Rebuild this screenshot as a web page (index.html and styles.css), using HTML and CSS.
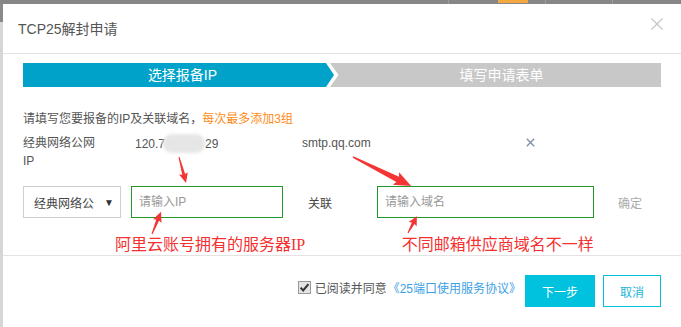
FILE: index.html
```html
<!DOCTYPE html>
<html lang="zh-CN">
<head>
  <meta charset="UTF-8">
  <title>TCP25解封申请</title>
  <link rel="stylesheet" href="styles.css">
</head>
<body>
<div class="topbar"><span class="sep sep1"></span><span class="badge"></span><span class="sep sep2"></span><span class="sep sep3"></span></div>

<div class="modal">
  <div class="modal-header">
    <span class="modal-title">TCP25解封申请</span>
    <svg class="close" width="12" height="12" viewBox="0 0 12 12">
      <path d="M0.5 0.5 L11.5 11.5 M11.5 0.5 L0.5 11.5" stroke="#c4c4c4" stroke-width="1.1" fill="none"/>
    </svg>
  </div>

  <div class="modal-body">
    <div class="steps">
      <div class="step active">选择报备IP</div>
      <div class="step">填写申请表单</div>
      <svg class="chevron" width="13" height="24" viewBox="0 0 13 24">
        <path d="M0 0 H4 L12.5 12 L4 24 H0 Z" fill="#fff"/>
        <path d="M0 0 L8 12 L0 24 Z" fill="#00a2ca"/>
      </svg>
    </div>

    <p class="tip">请填写您要报备的IP及关联域名，<span class="orange">每次最多添加3组</span></p>

    <div class="row">
      <div class="col-label">经典网络公网IP</div>
      <div class="col-ip">120.7<span class="blur"></span>29</div>
      <div class="col-domain">smtp.qq.com</div>
      <svg class="remove" width="9" height="9" viewBox="0 0 9 9">
        <path d="M0.8 0.8 L8.2 8.2 M8.2 0.8 L0.8 8.2" stroke="#8595a8" stroke-width="1.5" fill="none"/>
      </svg>
    </div>

    <div class="controls">
      <div class="select"><span class="select-text">经典网络公</span><span class="caret">▼</span></div>
      <input class="field field-ip" type="text" placeholder="请输入IP">
      <span class="link-word">关联</span>
      <input class="field field-domain" type="text" placeholder="请输入域名">
      <span class="confirm">确定</span>
    </div>

    <div class="notes">
      <span class="note note1">阿里云账号拥有的服务器IP</span>
      <span class="note note2">不同邮箱供应商域名不一样</span>
    </div>
  </div>

  <div class="modal-footer">
    <label class="agree">
      <svg class="check" width="13" height="13" viewBox="0 0 13 13">
        <rect x="0.5" y="0.5" width="12" height="12" fill="#e4e4e4" stroke="#9a9a9a"/>
        <path d="M2.6 6.6 L5.2 9.4 L10.4 3.2" stroke="#333" stroke-width="2" fill="none"/>
      </svg>
      已阅读并同意<a class="protocol">《25端口使用服务协议》</a>
    </label>
    <button class="btn btn-primary">下一步</button>
    <button class="btn btn-default">取消</button>
  </div>

  <!-- screenshot annotations -->
  <svg class="marks" width="678" height="323" viewBox="3 4 678 323">
    <g fill="#f43535">
      <path transform="translate(179 157) rotate(74.9)" d="M0 -0.5 L18 -1.5 L17 -4.5 L27 0 L17 4.5 L18 1.5 L0 0.5 Z"/>
      <path transform="translate(152 234) rotate(-67.8)" d="M0 -0.5 L15 -1.5 L14 -4.5 L24 0 L14 4.5 L15 1.5 L0 0.5 Z"/>
      <path transform="translate(353 157) rotate(26.6)" d="M0 -0.7 L50 -3 L48 -7 L65 0 L48 7 L50 3 L0 0.7 Z"/>
      <path transform="translate(408 233) rotate(-62.1)" d="M0 -0.5 L11 -1.5 L10 -4.5 L19 0 L10 4.5 L11 1.5 L0 0.5 Z"/>
    </g>
  </svg>
</div>
</body>
</html>
```

FILE: styles.css
```css
html, body {
  margin: 0;
  height: 100%;
  overflow: hidden;
}
body {
  font-family: "Liberation Sans", "Noto Sans CJK SC", sans-serif;
  font-size: 12px;
  color: #555;
  background: linear-gradient(#8a8a8a 0, #8a8a8a 22px, #d6d6d6 22px);
}
.topbar {
  height: 4px;
  background: #868686;
  display: flex;
  align-items: flex-start;
}
.sep {
  width: 1px;
  height: 4px;
  background: #9c9c9c;
}
.sep1 { margin-left: 448px; }
.badge {
  width: 30px;
  height: 3px;
  margin-left: 49px;
  background: #f5a742;
}
.sep2 { margin-left: 17px; }
.sep3 { margin-left: 66px; }

.modal {
  position: relative;
  margin-left: 3px;
  width: 678px;
  height: 323px;
  background: #fff;
}
.modal-header {
  height: 49px;
  border-bottom: 1px solid #e3e3e3;
  padding: 0 18px 0 15px;
  display: flex;
  align-items: center;
  justify-content: space-between;
}
.modal-title {
  font-size: 14px;
  color: #555;
  line-height: 20px;
}
.close { margin-bottom: 9px; }

.modal-body {
  padding: 9px 20px 0;
}
.steps {
  position: relative;
  display: flex;
  height: 24px;
  background: #c8c8c8;
  color: #fff;
  font-size: 14px;
  line-height: 24px;
}
.step {
  flex: 1;
  padding-left: 16px;
  text-align: center;
}
.step.active {
  flex: 0 0 303px;
  box-sizing: border-box;
  background: #00a2ca;
}
.chevron {
  position: absolute;
  left: 303px;
  top: 0;
}

.tip {
  margin: 23px 0 0;
  line-height: 18px;
}
.orange { color: #ff8a14; }

.row {
  display: flex;
  margin-top: 6px;
  line-height: 18px;
}
.col-label {
  width: 80px;
  margin-right: 32px;
}
.col-ip { width: 167px; }
.col-domain { width: 224px; }
.blur {
  display: inline-block;
  width: 42px;
  height: 19px;
  margin-left: -2px;
  vertical-align: -5px;
  background: #e6e6e6;
  border-radius: 9px;
  filter: blur(1.5px);
}
.remove { margin-top: 4px; }

.controls {
  display: flex;
  align-items: center;
  margin-top: 16px;
  height: 32px;
}
.select {
  box-sizing: border-box;
  width: 98px;
  height: 32px;
  border: 1px solid #cfcfcf;
  padding-left: 10px;
  display: flex;
  align-items: center;
  color: #444;
}
.select-text {
  white-space: nowrap;
}
.caret {
  margin-left: 10px;
  font-size: 10px;
  color: #333;
}
.field {
  box-sizing: border-box;
  height: 32px;
  border: 1px solid #22982a;
  padding: 0 7px;
  font-family: inherit;
  font-size: 12px;
  color: #333;
  outline: none;
}
.field::placeholder { color: #999; }
.field-ip {
  width: 152px;
  margin-left: 10px;
}
.link-word {
  margin-left: 25px;
  color: #444;
}
.field-domain {
  width: 217px;
  margin-left: 45px;
}
.confirm {
  margin-left: 24px;
  color: #aaa;
}

.notes {
  height: 20px;
  padding-top: 17px;
  font-family: "Liberation Serif", "Noto Sans CJK SC", serif;
  font-size: 16px;
  line-height: 20px;
  color: #f43030;
  white-space: nowrap;
}
.note1 { margin-left: 92px; }
.note2 { margin-left: 93px; }

.modal-footer {
  border-top: 1px solid #e3e3e3;
  padding: 19px 20px 0;
  display: flex;
  justify-content: flex-end;
  align-items: center;
}
.agree {
  display: flex;
  align-items: center;
  margin-bottom: 7px;
  color: #555;
}
.check { margin-right: 4px; }
.protocol {
  margin-left: 1px;
  color: #3ba0e4;
}
.btn {
  height: 32px;
  font-family: inherit;
  font-size: 12px;
  cursor: pointer;
}
.btn-primary {
  width: 70px;
  margin-left: 4px;
  border: none;
  background: #00c1de;
  color: #fff;
}
.btn-default {
  width: 58px;
  margin-left: 8px;
  border: 1px solid #00c1de;
  background: #fff;
  color: #22b4d6;
}

.marks {
  position: absolute;
  left: 0;
  top: 0;
  pointer-events: none;
}
```
